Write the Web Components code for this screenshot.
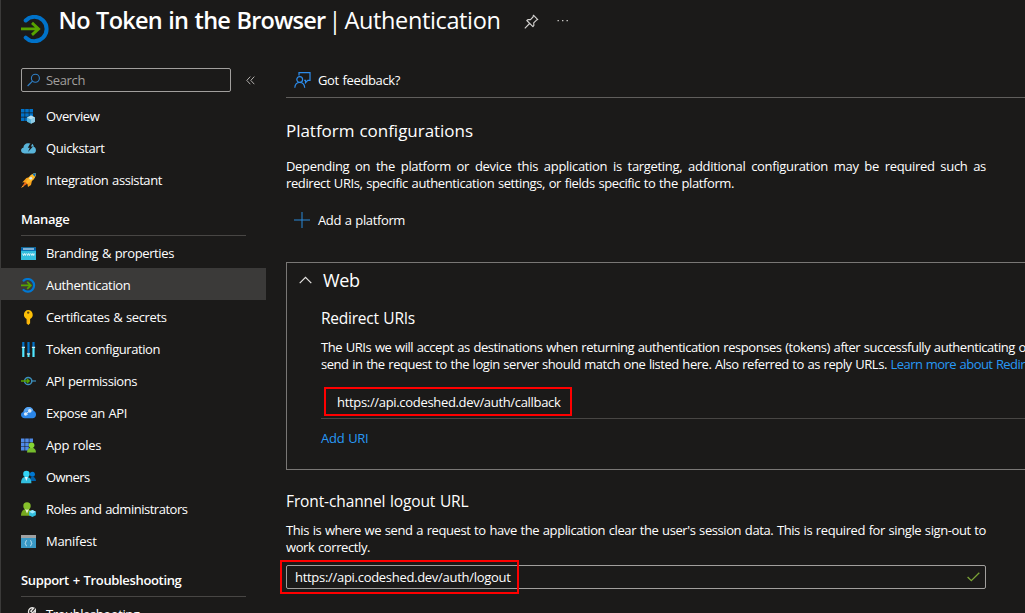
<!DOCTYPE html>
<html lang="en">
<head>
<meta charset="utf-8">
<title>Authentication</title>
<style>
html,body{margin:0;height:613px;overflow:hidden;background:#1b1a19}
body{font:13px/17px "Open Sans","Noto Sans",sans-serif;color:#fff;word-spacing:.7px}
</style>
</head>
<body>
<az-app></az-app>
<script>
const ICONS = {
  logo: [28,28,`<path d="M4.700 5.500A12.200 12.200 0 1 1 4.700 22.600" fill="none" stroke="#0072c9" stroke-width="4" stroke-linecap="round"/><path d="M0 13.900H17M11 7.900l6.600 6-6.600 6" fill="none" stroke="#57a300" stroke-width="2.800"/>`],
  auth: [15,15,`<path d="M2.600 2.600A6.300 6.300 0 1 1 2.600 12" fill="none" stroke="#0078d4" stroke-width="2.200" stroke-linecap="round"/><path d="M0 7.400H9.600M6.200 3.900l3.700 3.500-3.700 3.500" fill="none" stroke="#57a300" stroke-width="1.700"/>`],
  overview: [15,15,`<g fill="#0072c9"><path d="M0 0h3.600v3.600H0zM4.200 0h3.600v3.600H4.200zM8.400 0H12v3.600H8.400zM0 4.200h3.600v3.600H0zM4.200 4.200h3.600v3.600H4.200zM8.400 4.200H12v3.600H8.400zM0 8.400h3.600V12H0zM4.200 8.400h3.600V12H4.200z"/></g><path d="M10 6.600l4 1.800v4.400l-4 2-4-2V8.400z" fill="#59b4d9"/><path d="M10 6.600l4 1.800-4 2-4-2z" fill="#b7dff0"/><path d="M10 10.400v4.400l4-2V8.400z" fill="#8fcbe5"/>`],
  quick: [15,15,`<path d="M3.500 12.500C-.8 12.500-1 7 2.400 6.700 2.600 3 5.800 1.400 8.500 2.500c2-.8 4.200.6 4.200 3.200 3.200.9 3 6.800-.7 6.800z" fill="#59b4d9"/><path d="M9.800 1.500L6.800 6.800h2L7 11l5-5.400H9.900l2-4z" fill="#1b1a19"/>`],
  rocket: [15,15,`<path d="M15 0c-.2 3.600-1.600 5.800-4 7.800l-1 4.200-3 2-.6-3-3.600-1.800-1.600.2L5.400 5 8 4.200C10 1.600 12 .3 15 0z" fill="#f9a11b"/><path d="M15 0c-3 .2-5 1.700-7 4.200L4.600 9.500l1.400 1.400 5-3.100C13.400 5.800 14.800 3.600 15 0z" fill="#fdb92a"/><path d="M4.300 8.700L0 15l6.300-4.300z" fill="#ef6b16"/><path d="M15 0l-3.700 1 2.600 2.800z" fill="#0072c9"/><circle cx="9.800" cy="5.300" r="1.400" fill="#d8ecf6"/><path d="M.2 14.800l1.900-2 .5.600z" fill="#ffd34a"/>`],
  brand: [15,15,`<path d="M0 1.500h15V14H0z" fill="#32bedd"/><path d="M0 1.500h15v3.300H0z" fill="#0062ad"/><path d="M2 2.500h11v1H2z" fill="#fff"/><path d="M1.600 7.500l.9 2 .9-2 .9 2 .7-2m.8 0l.9 2 .9-2 .9 2 .7-2m.8 0l.9 2 .9-2 .9 2 .6-2" fill="none" stroke="#fff" stroke-width=".8"/>`],
  key: [15,15,`<path d="M7.200 0a4.700 4.700 0 0 1 1.900 8.900v4.400L7.400 15 5.600 13.400V8.900A4.700 4.700 0 0 1 7.200 0z" fill="#fdc006"/><circle cx="7.200" cy="2.600" r="1.200" fill="#5b4813"/><path d="M6.400 9.500h.9v4h-.9z" fill="#ff9d14"/>`],
  token: [15,15,`<path d="M1.200 0h2.200v5H1.200zM6.400 0h2.200v11H6.400zM11.400 0h2.200v5h-2.200z" fill="#0072c9"/><path d="M1.200 6h2.200v9H1.200zM6.500 12h2v3h-2zM11.400 6h2.200v9h-2.200z" fill="#50e6ff"/><path d="M.8 4.800H4v1.100H.8zM5.900 11.300h3.200v1.100H5.900zM10.900 4.800h3.200v1.100h-3.200z" fill="#c8f2fb"/>`],
  api: [15,15,`<circle cx="7.200" cy="7" r="3.600" fill="none" stroke="#3d8fbd" stroke-width="1.500"/><path d="M11 7h4" stroke="#3d8fbd" stroke-width="1.200"/><path d="M0 7h8.200M5.900 4.900L8.200 7 5.900 9.100" fill="none" stroke="#57a300" stroke-width="1.400"/>`],
  cloud: [15,15,`<path d="M3.800 12.200C-1 12.200-1.100 6.300 2.500 6c.3-2.800 2.500-5 5.100-5 2.400 0 4.300 1.500 4.900 4 3.600.6 3.400 7.200-.9 7.200z" fill="#2b86e8"/><path d="M2.500 6c.3-2.800 2.500-5 5.100-5 2.400 0 4.300 1.500 4.900 4-4 0-8 .5-10 1z" fill="#58a5f2"/><circle cx="4.600" cy="8" r="1.700" fill="#dcecfb"/><circle cx="8.800" cy="4.900" r="1.800" fill="#dcecfb"/><path d="M4.600 8l4.200-3.100" stroke="#dcecfb" stroke-width="1"/><circle cx="6.300" cy="8.300" r=".8" fill="#9cc8f5"/>`],
  approles: [15,15,`<path d="M0 .6h3.600v3.600H0zM4.200.6h3.600v3.600H4.200zM8.400.6H12v3.600H8.400zM0 4.800h3.600v3.600H0zM4.200 4.800h3.600v3.600H4.200zM0 9h3.600v3.600H0zM4.200 9h3.600v3.600H4.200z" fill="#4f8ae8"/><path d="M8.400 4.800H12v3.600H8.400z" fill="#3a62b5"/><path d="M6 14.500c0-2.800 1.600-4.800 4.500-4.800s4.500 2 4.500 4.800z" fill="#76bc2d"/><circle cx="10.600" cy="7.200" r="2.800" fill="#86d633"/>`],
  owners: [15,15,`<circle cx="11.400" cy="4.200" r="2.500" fill="#0078d4"/><path d="M9 11c0-3 1-4.200 2.600-4.200S15 8.500 15 11z" fill="#0062ad"/><path d="M0 13.200C0 8.800 2 6.800 5 6.800s5.400 2 5.400 6.400z" fill="#32bedd"/><path d="M3.700 7h3.200l-1.500 4z" fill="#e3f8fc"/><circle cx="5.400" cy="3.900" r="3.200" fill="#32d4f5"/>`],
  roles: [15,15,`<path d="M0 13.800C0 9.400 2 7 5.500 7S12 9.400 12 13.800z" fill="#76a81e"/><path d="M4 7h4l-2 4.500z" fill="#eaf5da"/><circle cx="6" cy="4" r="3.700" fill="#86c02b"/><path d="M11.400 8l3.500 1.700v3.600L11.400 15 8 13.300V9.700z" fill="#32bedd"/><path d="M11.400 8l3.500 1.700-3.500 1.700L8 9.700z" fill="#9cebff"/>`],
  manifest: [15,15,`<path d="M0 1h15v13H0z" fill="#3999c6"/><path d="M0 1h15v3H0z" fill="#a0a1a2"/><path d="M5.700 6.500c-1.400 0-.4 2.200-1.700 2.700 1.300.5.300 2.700 1.700 2.700M9.300 6.500c1.400 0 .4 2.200 1.700 2.700-1.300.5-.3 2.700-1.700 2.700" fill="none" stroke="#d8edf6" stroke-width=".9"/>`],
  wrench: [15,15,`<path d="M6.200 5.900L.9 11.600c-1 1.400.8 3 2.100 1.900l5.300-5.600c2.600.7 5-1.700 4.900-5.600L10.200 5.800 8.300 4.200l3-3.200C8.300-.1 5.300 2.700 6.200 5.900z" transform="translate(1.500 0)" fill="none" stroke="#e6e4e2" stroke-width="1.300"/>`],
  search: [14,14,`<circle cx="8.400" cy="5.200" r="4" fill="none" stroke="#2f7fc6" stroke-width="1.100"/><path d="M5.500 8.100L.6 13" stroke="#2f7fc6" stroke-width="1.200"/>`],
  collapse: [9,9,`<path d="M4.300.6L.8 4.400l3.500 3.800M8.300.6L4.800 4.400l3.500 3.800" fill="none" stroke="#b3b0ad" stroke-width="1"/>`],
  pin: [15,15,`<path d="M9.400 1.200l4.400 4.400-1.300.5-2.800 2.800.2 2.500-1 1.200L2.800 6.500l1.400-1 2.300.1L9 3zM5.600 9.500L.8 14.300" fill="none" stroke="#d6d4d2" stroke-width="1.100" stroke-linejoin="round"/>`],
  dots: [12,3,`<path d="M.5 1h1.400v1.300H.5zM5 1h1.400v1.300H5zM9.500 1h1.400v1.300H9.500z" fill="#c8c6c4"/>`],
  feedback: [17,17,`<path d="M5 3.600V.7h11v7.600h-2.200l-2.300 2.400V8.300h-1.300" fill="none" stroke="#2d8ceb" stroke-width="1.200"/><circle cx="5.700" cy="7.500" r="2.900" fill="none" stroke="#2d8ceb" stroke-width="1.200"/><path d="M.8 15.800c.2-3.200 2-5.300 4.900-5.300s4.800 2.100 5 5.300" fill="none" stroke="#2d8ceb" stroke-width="1.200"/>`],
  plus: [16,16,`<path d="M7.500 0h1v16h-1zM0 7.500h16v1H0z" fill="#2b88d8"/>`],
  chevron: [13,8,`<path d="M.7 7.200L6.500 1.300l5.800 5.900" fill="none" stroke="#e6e4e2" stroke-width="1.200"/>`],
  check: [13,10,`<path d="M.6 5l3.700 3.700L12.300.7" fill="none" stroke="#7ba336" stroke-width="1.300"/>`]
};

function define(name, html, setup) {
  const t = document.createElement('template');
  t.innerHTML = html;
  customElements.define(name, class extends HTMLElement {
    connectedCallback() {
      if (this.shadowRoot) return;
      this.attachShadow({mode:'open'}).append(t.content.cloneNode(true));
      if (setup) setup(this, this.shadowRoot);
    }
  });
}

define('az-icon', `<style>:host{display:block;flex:none}svg{display:block}</style><svg></svg>`, (el, root) => {
  const [w, h, body] = ICONS[el.getAttribute('name')];
  const svg = root.querySelector('svg');
  svg.setAttribute('width', w); svg.setAttribute('height', h);
  svg.setAttribute('viewBox', `0 0 ${w} ${h}`);
  svg.innerHTML = body;
});

/* One line of text tracked to a set width; "gap" spreads the words instead of the letters. */
define('az-text', `<style>:host{display:block;width:max-content;white-space:pre;flex:none}</style><slot></slot>`, el => {
  const w = parseFloat(el.getAttribute('w'));
  if (!w) return;
  const text = el.textContent;
  if (el.hasAttribute('gap')) {
    el.style.letterSpacing = el.getAttribute('gap') + 'px';
    el.style.wordSpacing = '0px';
    el.style.wordSpacing = (w - el.getBoundingClientRect().width) / (text.split(' ').length - 1) + 'px';
  } else {
    el.style.letterSpacing = (w - el.getBoundingClientRect().width) / text.length + 'px';
  }
});

define('az-nav-item', `<style>
:host{display:flex;align-items:center;height:32px;padding:2px 0 0 20px;gap:10px;box-sizing:border-box}
:host([selected]){background:#3b3a39}
</style>`, (el, root) => {
  const icon = document.createElement('az-icon');
  icon.setAttribute('name', el.getAttribute('icon'));
  const text = document.createElement('az-text');
  text.setAttribute('w', el.getAttribute('w'));
  text.textContent = el.getAttribute('label');
  root.append(icon, text);
});

define('az-nav-heading', `<style>
:host{display:flex;flex-direction:column;height:41px;box-sizing:border-box;padding:16px 20px 0;font-weight:600}
.l{display:flex;align-items:flex-start;box-sizing:border-box;border-bottom:1px solid #484644;height:25px}
</style><div class="l"><slot></slot></div>`);

define('az-search', `<style>
:host{display:flex;align-items:center;gap:15px;height:24px;padding-left:20px}
.b{display:flex;align-items:center;gap:5px;width:210px;height:24px;box-sizing:border-box;border:1px solid #a19f9d;border-radius:2px;padding-left:5px;color:#a19f9d}
</style><div class="b"><az-icon name="search"></az-icon><az-text w="39">Search</az-text></div><az-icon name="collapse"></az-icon>`);

define('az-header', `<style>
:host{display:flex;height:68px;padding-left:20px;box-sizing:border-box;font-size:23.500px;line-height:32px;word-spacing:1px}
.logo{margin-top:15px}
.t{display:flex;margin:4px 0 0 9.500px}
.t b{font-weight:600}
.bar{width:19px;text-align:center}
.pin{margin:14px 0 0 23.500px}.dots{margin:19px 0 0 18px}
</style><az-icon class="logo" name="logo"></az-icon>
<div class="t"><b><az-text w="267">No Token in the Browser</az-text></b><az-text class="bar">|</az-text><az-text w="156">Authentication</az-text></div>
<az-icon class="pin" name="pin"></az-icon><az-icon class="dots" name="dots"></az-icon>`);

define('az-sidebar', `<style>
:host{display:flex;flex-direction:column;width:265px;flex:none}
nav{margin-top:7px}
</style><az-search></az-search>
<nav>
<az-nav-item icon="overview" label="Overview" w="53.500"></az-nav-item>
<az-nav-item icon="quick" label="Quickstart" w="58.500"></az-nav-item>
<az-nav-item icon="rocket" label="Integration assistant" w="116"></az-nav-item>
<az-nav-heading><az-text w="48.500">Manage</az-text></az-nav-heading>
<az-nav-item icon="brand" label="Branding &amp; properties" w="128"></az-nav-item>
<az-nav-item selected icon="auth" label="Authentication" w="84.500"></az-nav-item>
<az-nav-item icon="key" label="Certificates &amp; secrets" w="120.500"></az-nav-item>
<az-nav-item icon="token" label="Token configuration" w="114"></az-nav-item>
<az-nav-item icon="api" label="API permissions" w="91"></az-nav-item>
<az-nav-item icon="cloud" label="Expose an API" w="81"></az-nav-item>
<az-nav-item icon="approles" label="App roles" w="55"></az-nav-item>
<az-nav-item icon="owners" label="Owners" w="43.500"></az-nav-item>
<az-nav-item icon="roles" label="Roles and administrators" w="141.500"></az-nav-item>
<az-nav-item icon="manifest" label="Manifest" w="50.500"></az-nav-item>
<az-nav-heading><az-text w="160.500">Support + Troubleshooting</az-text></az-nav-heading>
<az-nav-item icon="wrench" label="Troubleshooting" w="93.500"></az-nav-item>
</nav>`);

define('az-command', `<style>:host{display:flex;align-items:center;gap:8px;height:24px}</style><slot></slot>`);

define('az-highlight', `<style>:host{display:block;box-sizing:border-box;border:2px solid #f00}</style><slot></slot>`);

define('az-card', `<style>
:host{display:block;box-sizing:border-box;width:800px;height:208px;border:1px solid #797775;padding:6px 0 0 34px}
.head{display:flex;align-items:center;gap:11px;height:22px;margin-left:-22px}
h4{margin:16px 0 0;font:400 15.500px/22px "Open Sans","Noto Sans",sans-serif}
.h{font-size:18px}
.p{margin-top:10px}
.row{display:flex}
.a{color:#2899f5}
az-highlight{width:248px;height:29px;margin:14px 0 0 3px;padding:5px 0 0 11px}
.rule{height:1px;background:#484644;margin-top:2px}
.add{margin-top:11px}
</style>
<div class="head"><az-icon name="chevron"></az-icon><az-text class="h" w="36.500">Web</az-text></div>
<h4><az-text w="94">Redirect URIs</az-text></h4>
<div class="p"><az-text w="705">The URIs we will accept as destinations when returning authentication responses (tokens) after successfully authenticating o</az-text>
<div class="row"><az-text w="569.500">send in the request to the login server should match one listed here. Also referred to as reply URLs. </az-text><az-text class="a" w="134.500">Learn more about Redir</az-text></div></div>
<az-highlight><az-text w="223.500">https://api.codeshed.dev/auth/callback</az-text></az-highlight>
<div class="rule"></div>
<az-text class="a add" w="47.500">Add URI</az-text>`);

define('az-field', `<style>
:host{display:flex;align-items:center;justify-content:space-between;position:relative;box-sizing:border-box;width:700px;height:24px;border:1px solid #a19f9d;border-radius:2px;padding:0 5px 0 8px}
az-highlight{position:absolute;left:-7px;top:-6px;width:239px;height:34px}
</style><az-text w="215.500">https://api.codeshed.dev/auth/logout</az-text><az-icon name="check"></az-icon><az-highlight></az-highlight>`);

define('az-main', `<style>
:host{display:flex;flex-direction:column;align-items:flex-start;padding-left:20px;width:800px;flex:none}
.bar{width:100%;height:30px;box-sizing:border-box;border-bottom:1px solid #605e5c}
.cmd{padding-left:8px}
.bar .cmd{gap:7px}
h2{font:400 17px/24px "Open Sans","Noto Sans",sans-serif;margin:21px 0 15px}
.add{margin:16px 0 30px}
h3{font:400 15.500px/22px "Open Sans","Noto Sans",sans-serif;margin:20px 0 10px}
az-field{margin-top:9px}
</style>
<div class="bar"><az-command class="cmd"><az-icon name="feedback"></az-icon><az-text w="82">Got feedback?</az-text></az-command></div>
<h2><az-text w="187">Platform configurations</az-text></h2>
<az-text w="700" gap="-.32">Depending on the platform or device this application is targeting, additional configuration may be required such as</az-text>
<az-text w="448">redirect URIs, specific authentication settings, or fields specific to the platform.</az-text>
<az-command class="cmd add"><az-icon name="plus"></az-icon><az-text w="87">Add a platform</az-text></az-command>
<az-card></az-card>
<h3><az-text w="182.500">Front-channel logout URL</az-text></h3>
<az-text w="700">This is where we send a request to have the application clear the user's session data. This is required for single sign-out to</az-text>
<az-text w="84">work correctly.</az-text>
<az-field></az-field>`);

define('az-app', `<style>
:host{display:block;box-sizing:border-box;width:1025px;height:613px;overflow:hidden;border-left:1px solid #3b3a39;background:#1b1a19}
.body{display:flex}
</style><az-header></az-header><div class="body"><az-sidebar></az-sidebar><az-main></az-main></div>`);
</script>
</body>
</html>
